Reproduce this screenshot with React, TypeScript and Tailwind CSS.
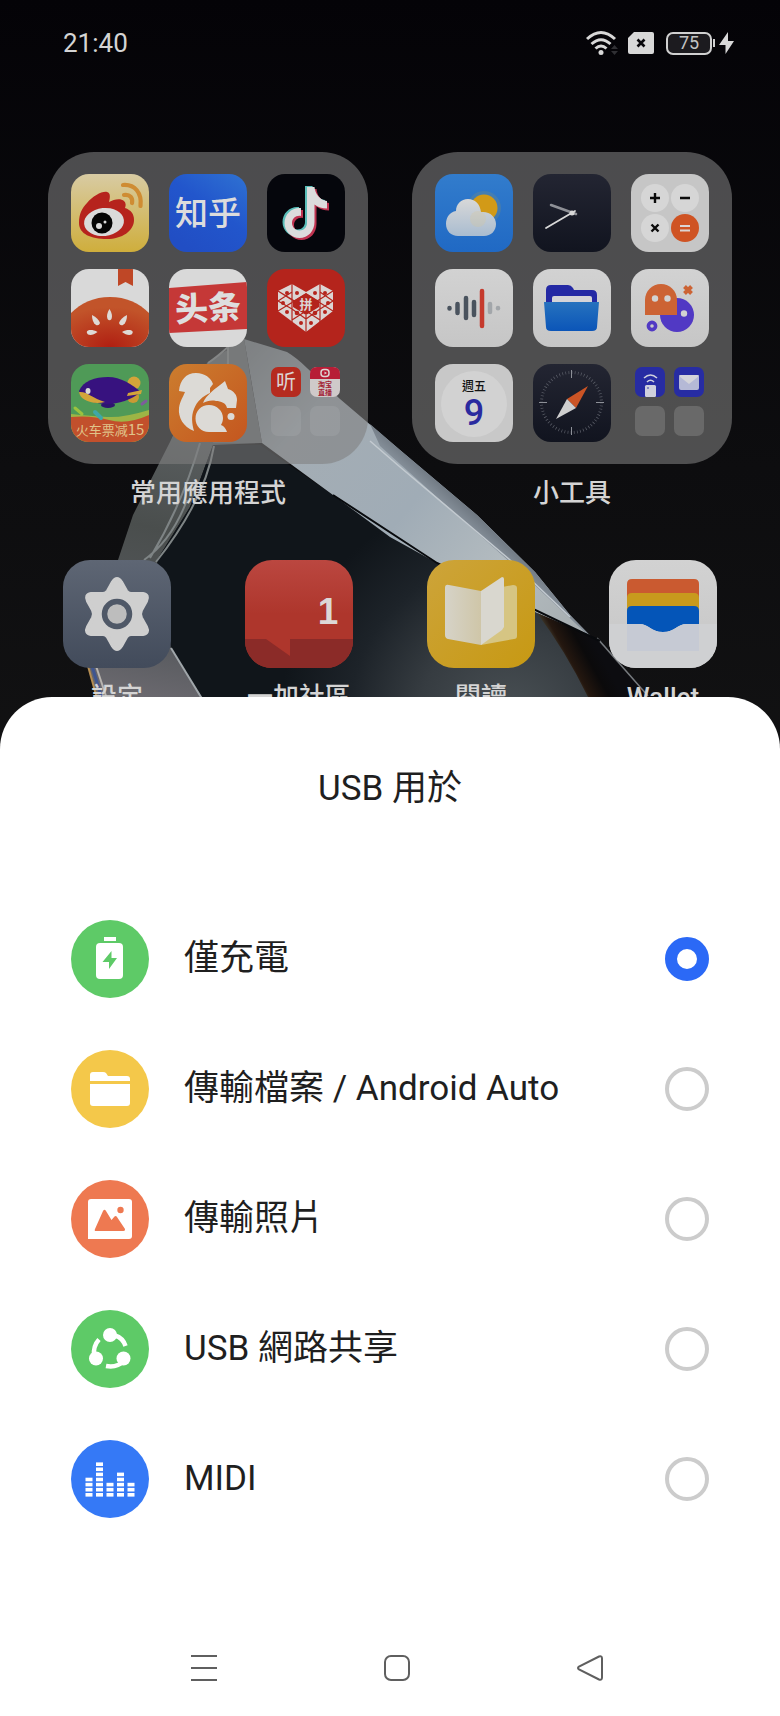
import React, { useState } from 'react';

type IconProps = { children: React.ReactNode };

const Tile: React.FC<IconProps> = ({ children }) => (
  <svg viewBox="0 0 78 78" className="size-[78px] rounded-[18px]" aria-hidden="true">
    {children}
  </svg>
);

const AppIcon: React.FC<IconProps> = ({ children }) => (
  <svg viewBox="0 0 108 108" className="size-[108px] rounded-[27px]" aria-hidden="true">
    {children}
  </svg>
);

const SC = "font-['Noto_Sans_CJK_SC',sans-serif]";
const TC = "font-['Noto_Sans_CJK_TC',sans-serif]";

/* Shared gradients, referenced by id from the icons below */
const Gradients = () => (
  <svg className="absolute size-0" aria-hidden="true">
    <defs>
      <linearGradient id="paper" x1="0" y1="0" x2="0" y2="1">
        <stop offset="0" stopColor="#d2d2d2" />
        <stop offset="1" stopColor="#c6c6c6" />
      </linearGradient>
      <linearGradient id="weibo" x1="0" y1="0" x2="0" y2="1">
        <stop offset="0" stopColor="#d8cba3" />
        <stop offset="1" stopColor="#cfae3c" />
      </linearGradient>
      <linearGradient id="zhihu" x1="1" y1="0" x2="0.3" y2="1">
        <stop offset="0" stopColor="#2f72d2" />
        <stop offset="0.5" stopColor="#2256cc" />
        <stop offset="1" stopColor="#214ec4" />
      </linearGradient>
      <radialGradient id="tomato" cx="0.5" cy="1" r="0.8">
        <stop offset="0" stopColor="#b01f12" />
        <stop offset="1" stopColor="#c2542a" />
      </radialGradient>
      <linearGradient id="uc" x1="0" y1="0" x2="1" y2="1">
        <stop offset="0" stopColor="#cc7d2e" />
        <stop offset="1" stopColor="#c4561f" />
      </linearGradient>
      <linearGradient id="sky" x1="0" y1="0" x2="0" y2="1">
        <stop offset="0" stopColor="#327ccc" />
        <stop offset="1" stopColor="#2069c4" />
      </linearGradient>
      <linearGradient id="cloud" x1="0" y1="0" x2="0" y2="1">
        <stop offset="0" stopColor="#d8d8d8" />
        <stop offset="1" stopColor="#a9bcd0" />
      </linearGradient>
      <linearGradient id="night" x1="0" y1="0" x2="0" y2="1">
        <stop offset="0" stopColor="#232532" />
        <stop offset="1" stopColor="#11141f" />
      </linearGradient>
      <linearGradient id="folder" x1="0" y1="0" x2="0" y2="1">
        <stop offset="0" stopColor="#2672be" />
        <stop offset="1" stopColor="#0b55b8" />
      </linearGradient>
      <linearGradient id="slate" x1="0" y1="0" x2="0" y2="1">
        <stop offset="0" stopColor="#5e6674" />
        <stop offset="1" stopColor="#424b5b" />
      </linearGradient>
      <linearGradient id="book" x1="0" y1="0" x2="1" y2="1">
        <stop offset="0" stopColor="#cda43a" />
        <stop offset="1" stopColor="#c79913" />
      </linearGradient>
      <linearGradient id="page" x1="0" y1="0" x2="1" y2="0">
        <stop offset="0" stopColor="#d6d3c8" />
        <stop offset="1" stopColor="#cfc6a8" />
      </linearGradient>
      <linearGradient id="bubble" x1="0" y1="0" x2="0" y2="1">
        <stop offset="0" stopColor="#bb4740" />
        <stop offset="0.5" stopColor="#ae362c" />
        <stop offset="1" stopColor="#ae362c" />
      </linearGradient>
    </defs>
  </svg>
);

const Wallpaper = () => (
  <svg
    viewBox="0 0 780 780"
    preserveAspectRatio="xMidYMin slice"
    className="absolute inset-0 h-full w-full"
    aria-hidden="true"
  >
    <defs>
      <linearGradient id="wp-bg" x1="0" y1="0" x2="0" y2="1">
        <stop offset="0" stopColor="#040307" />
        <stop offset="0.6" stopColor="#0d0d0f" />
        <stop offset="1" stopColor="#121213" />
      </linearGradient>
      <linearGradient id="wp-face" gradientUnits="userSpaceOnUse" x1="250" y1="350" x2="590" y2="640">
        <stop offset="0" stopColor="#7f868b" />
        <stop offset="0.2" stopColor="#a4adb4" />
        <stop offset="0.5" stopColor="#a0acb6" />
        <stop offset="0.75" stopColor="#b4bcc0" />
        <stop offset="1" stopColor="#a5acaf" />
      </linearGradient>
      <linearGradient id="wp-edge" gradientUnits="userSpaceOnUse" x1="470" y1="490" x2="450" y2="512">
        <stop offset="0" stopColor="#5a626b" />
        <stop offset="1" stopColor="#87919b" />
      </linearGradient>
      <linearGradient id="wp-band" gradientUnits="userSpaceOnUse" x1="200" y1="360" x2="130" y2="700">
        <stop offset="0" stopColor="#666b6e" />
        <stop offset="0.5" stopColor="#4a4e4d" />
        <stop offset="0.8" stopColor="#55585c" />
        <stop offset="1" stopColor="#6c6a70" />
      </linearGradient>
      <radialGradient id="wp-core" gradientUnits="userSpaceOnUse" cx="510" cy="720" r="230">
        <stop offset="0" stopColor="#4a5155" />
        <stop offset="0.4" stopColor="#363c41" />
        <stop offset="0.7" stopColor="#1d2329" />
        <stop offset="1" stopColor="#10151a" />
      </radialGradient>
      <linearGradient id="wp-amber" gradientUnits="userSpaceOnUse" x1="556" y1="660" x2="592" y2="640">
        <stop offset="0" stopColor="#565643" />
        <stop offset="0.3" stopColor="#24170f" />
        <stop offset="0.7" stopColor="#0b0a0b" />
        <stop offset="1" stopColor="#0c0c10" />
      </linearGradient>
    </defs>
    <rect width="780" height="780" fill="url(#wp-bg)" />
    <path d="M244 339L207 363L170 442L133 515L118 560L84 650L97 697L120 780H250L202 697L171 648L157 560L190 507L213 445L260 443Z" fill="url(#wp-band)" />
    <path d="M213 445H260L333 495L390 537L437 563L537 613L600 640L650 700V780H250L202 697L171 648L157 560L190 507Z" fill="url(#wp-core)" />
    <path d="M228 347L244 340L262 443H213L222 400Z" fill="#6d7173" />
    <path d="M244 339L287 352Q297 358 307 368L340 399L400 450L477 515L535 572L570 615L607 653L597 640L537 613L437 563L390 537L333 495L262 443L252 385Z" fill="url(#wp-face)" />
    <path d="M400 450L477 515L535 572L570 615L607 653L510 562L450 509L380 446L370 424Z" fill="url(#wp-edge)" />
    <path d="M370 441L400 467L457 515L510 560L570 617" fill="none" stroke="#c3cad0" strokeWidth="1.5" />
    <path d="M537 613L597 638L643 690L660 780H610L588 697Q565 650 537 613Z" fill="url(#wp-amber)" />
    <path d="M597 638L648 696" stroke="#777b7f" strokeWidth="1.5" />
    <path d="M333 495L437 563L600 641" fill="none" stroke="#080a0d" strokeWidth="2" />
    <path d="M187 500Q172 540 144 560M200 443Q182 505 150 558M214 446Q205 500 156 562" fill="none" stroke="#7e8485" strokeWidth="2" />
    <path d="M228 347Q217 357 208 363M228 347V365" fill="none" stroke="#8b8f90" strokeWidth="2" />
    <path d="M171 648L204 702" stroke="#a0a6aa" strokeWidth="2" />
    <path d="M88 666L98 702" stroke="#b58d52" strokeWidth="2" />
    <path d="M92 666L103 702" stroke="#3e5591" strokeWidth="3" />
    <path d="M96 666L108 702" stroke="#b9b5b0" strokeWidth="2" />
  </svg>
);

const Weibo = () => (
  <Tile>
    <rect width="78" height="78" fill="url(#weibo)" />
    <path d="M8 49C8 40 11 34 16 29C22 22 31 17 36 18C40 19 39 24 38 28C43 25 50 24 53 27C55 29 55 31 54 34C60 36 63 40 63 46C63 57 51 65 36 65C20 65 8 60 8 49Z" fill="#b6231d" />
    <ellipse cx="33" cy="48" rx="20" ry="14" transform="rotate(-6 33 48)" fill="#dadada" />
    <circle cx="31" cy="49" r="10.500" fill="#050505" />
    <circle cx="28" cy="52" r="3" fill="#dadada" />
    <circle cx="34" cy="48" r="1.500" fill="#dadada" />
    <path d="M52 11C64 10 71 19 69.500 32M53 21C59 20 62 24 61 29" fill="none" stroke="#cf8c33" strokeWidth="4.200" strokeLinecap="round" />
  </Tile>
);

const Zhihu = () => (
  <Tile>
    <rect width="78" height="78" fill="url(#zhihu)" />
    <text x="39" y="51" textAnchor="middle" fill="#dcdcdc" className={`${SC} text-[33px] font-medium`}>知乎</text>
  </Tile>
);

const notePath = 'M40 13H47.500C48 20 53 26 60 27V34.500C55 34.500 51 33 47.500 30.500V48C47.500 57 41 64 32.500 64C24 64 17.500 57 17.500 49C17.500 40 25 33 34 34V42C29 41 25 44.500 25 49C25 53 28.500 56.500 32.500 56.500C37 56.500 40 53 40 49Z';

const Douyin = () => (
  <Tile>
    <rect width="78" height="78" fill="#05060c" />
    <path d={notePath} transform="translate(-2 -1)" fill="#59bdb8" />
    <path d={notePath} transform="translate(2 2)" fill="#bf3350" />
    <path d={notePath} fill="#dcdcdc" />
  </Tile>
);

const Tomato = () => (
  <Tile>
    <rect width="78" height="78" fill="#d9d9d9" />
    <path d="M47 0H62V17L54.500 13L47 17Z" fill="#bf4726" />
    <path d="M0 44C10 34 23 28 39 28S68 34 78 44V78H0Z" fill="url(#tomato)" />
    <g fill="#dedad6">
      <path d="M38.500 40C41 44 41.500 47 40.500 50Q38.500 52.500 36.500 50C35.500 47 36 44 38.500 40Z" />
      <path d="M21 46C25.500 48 28 51 29 54Q28 57 25 56C22 54 21 50 21 46Z" />
      <path d="M56 46C51.500 48 49 51 48 54Q49 57 52 56C55 54 56 50 56 46Z" />
      <path d="M26.500 63C23 61 19.500 60.500 17 61.500Q14.500 63 17 65.500C20 66.500 23 65.500 26.500 63Z" />
      <path d="M51 63C54.500 61 58 60.500 60.500 61.500Q63 63 60.500 65.500C57.500 66.500 54.500 65.500 51 63Z" />
    </g>
  </Tile>
);

const Toutiao = () => (
  <Tile>
    <rect width="78" height="78" fill="#d9d9d9" />
    <path d="M0 19L78 13V60L0 64Z" fill="#c53837" />
    <text x="39" y="51" textAnchor="middle" fill="#dedede" transform="rotate(-3 39 39)" className={`${SC} text-[33px] font-black`}>头条</text>
  </Tile>
);

const Pinduoduo = () => (
  <Tile>
    <rect width="78" height="78" fill="#b4241c" />
    <path d="M25 15L39 23L53 15L66 22V42L39 63L11 42V22Z" fill="#dcd5d4" />
    <path d="M25 15V53M53 15V53M39 46V63M11 22L39 39L66 22M11 42L39 25L66 42M25 31L11 22M11 32L25 40L39 50L53 40L66 32M11 32L25 23M66 32L53 23M25 51L39 42L53 51" fill="none" stroke="#b4241c" strokeWidth="1.200" />
    <path d="M39 24L52 32V38L39 46L26 38V32Z" fill="#b4241c" />
    <g fill="#b4241c">
      <circle cx="20" cy="24" r="2" /><circle cx="30" cy="24" r="2" /><circle cx="16" cy="34" r="2" />
      <circle cx="48" cy="24" r="2" /><circle cx="58" cy="24" r="2" /><circle cx="61" cy="34" r="2" />
      <circle cx="20" cy="43" r="2" /><circle cx="30" cy="44" r="2.300" /><circle cx="48" cy="44" r="2.300" />
      <circle cx="58" cy="43" r="2" /><circle cx="34" cy="54" r="2" /><circle cx="44" cy="54" r="2" />
    </g>
    <text x="39" y="40" textAnchor="middle" fill="#dcd5d4" className={`${SC} text-[13px] font-bold`}>拼</text>
  </Tile>
);

const Qunar = () => (
  <Tile>
    <rect width="78" height="78" fill="#4f9a57" />
    <circle cx="63" cy="19" r="6.500" fill="#d3a43a" />
    <circle cx="62" cy="33" r="6" fill="#c99a34" />
    <path d="M0 50Q20 52 36 53T78 46V78H0Z" fill="#9db545" />
    <path d="M0 53Q20 51 38 56T78 51V78H0Z" fill="#c2502c" />
    <ellipse cx="37" cy="41" rx="7" ry="3" fill="#2d1570" />
    <path d="M8 27C12 17 24 13 37 13C50 13 60 20 70 28C60 36 48 40 35 40C20 39 10 35 8 27Z" fill="#37127f" />
    <path d="M8 28C16 27 21 34 34 38C21 41 9 36 8 28Z" fill="#d3a43a" />
    <path d="M57 29L71 26L70 30L56 32Z" fill="#d3a43a" />
    <ellipse cx="17" cy="27" rx="2.500" ry="3" fill="#d8d8d8" />
    <path d="M4 44L11 50" stroke="#9bc23f" strokeWidth="3" strokeLinecap="round" />
    <path d="M71 40L75 37" stroke="#7e5c9c" strokeWidth="3" strokeLinecap="round" />
    <path d="M24 48L30 54" stroke="#3fa7a6" strokeWidth="4" strokeLinecap="round" />
    <text x="39" y="71" textAnchor="middle" fill="#e0c48a" className={`${SC} text-[13px]`}>
      火车票减<tspan className="text-[15px]">15</tspan>
    </text>
  </Tile>
);

const UcBrowser = () => (
  <Tile>
    <rect width="78" height="78" fill="url(#uc)" />
    <g fill="#dcdad6">
      <path d="M10 27C11 16 17 9 27 9C36 9 42 14 44 20L41 24V29C34 32 28 37 25 45C22 52 23 60 25 67C14 63 9 53 10 44C11 37 14 33 16 28Z" />
      <path d="M34 39C37 31 46 25 56 17L59 25C65 27 68 31 68 36L67 44H58C57 39 52 37 47 37C42 36 38 37 34 39Z" />
      <path d="M40 41C48 41 54 47 54 54C54 57 53 59 52 61C55 62 57 65 58 68H40C32 68 26.500 62 26.500 54.500C26.500 47 32 41 40 41Z" />
      <circle cx="62" cy="52.500" r="3.500" />
    </g>
  </Tile>
);

const tinyText = "font-['Liberation_Sans','Noto_Sans_CJK_SC',sans-serif] text-[7px] font-bold";

const MediaFolder = () => (
  <Tile>
    <rect x="4" y="3" width="30" height="30" rx="7" fill="#b52b1f" />
    <text x="19" y="25" textAnchor="middle" fill="#dcd5d4" className={`${SC} text-[20px]`}>听</text>
    <rect x="43" y="3" width="30" height="30" rx="7" fill="#cfcaca" />
    <path d="M43 15V10Q43 3 50 3H66Q73 3 73 10V15Z" fill="#b71d36" />
    <rect x="54" y="5.500" width="8" height="7" rx="3" fill="none" stroke="#dcd5d4" strokeWidth="1.500" />
    <path d="M57.500 7.500L60 9L57.500 10.500Z" fill="#dcd5d4" />
    <text x="58" y="23" textAnchor="middle" fill="#a32133" className={tinyText}>淘宝</text>
    <text x="58" y="31" textAnchor="middle" fill="#a32133" className={tinyText}>直播</text>
    <rect x="4" y="42" width="30" height="30" rx="7" fill="#fff" opacity="0.080" />
    <rect x="43" y="42" width="30" height="30" rx="7" fill="#fff" opacity="0.080" />
  </Tile>
);

const Weather = () => (
  <Tile>
    <rect width="78" height="78" fill="url(#sky)" />
    <circle cx="49" cy="34" r="17" fill="#7d8f7a" opacity="0.300" />
    <circle cx="49" cy="34" r="13.500" fill="#d29a17" />
    <path d="M23 62C16 62 11 57 11 50C11 43 15 38 21 37C21 30 26 25 33 25C40 25 45 30 46 38C55 37 61 43 61 50C61 57 56 62 49 62Z" fill="url(#cloud)" />
    <circle cx="43" cy="45" r="8" fill="#d8c79c" opacity="0.300" />
  </Tile>
);

const Clock = () => (
  <Tile>
    <rect width="78" height="78" fill="url(#night)" />
    <path d="M18 31L43 40" stroke="#8e9096" strokeWidth="2.500" strokeLinecap="round" />
    <path d="M13 54L42 37" stroke="#d8d8d8" strokeWidth="1.800" strokeLinecap="round" />
    <circle cx="39" cy="39" r="2.500" fill="#d8d8d8" />
  </Tile>
);

const Calculator = () => (
  <Tile>
    <rect width="78" height="78" fill="#c6c6c6" />
    <g fill="#d6d6d6">
      <circle cx="24" cy="24" r="14" />
      <circle cx="54" cy="24" r="14" />
      <circle cx="24" cy="54" r="14" />
    </g>
    <circle cx="54" cy="54" r="14" fill="#cf5323" />
    <path d="M19 24H29M24 19V29M49 24H59M20.500 50.500L27.500 57.500M27.500 50.500L20.500 57.500" stroke="#0b0b0b" strokeWidth="2.400" />
    <path d="M49 52H59M49 56.500H59" stroke="#dcd5d4" strokeWidth="2" />
  </Tile>
);

const Recorder = () => (
  <Tile>
    <rect width="78" height="78" fill="url(#paper)" />
    <g strokeWidth="4.500" strokeLinecap="round" stroke="#4a535e">
      <path d="M14.500 39V39.500M22.500 35V44M31 29V49M39 33V46" />
      <path d="M47 22V57" stroke="#c53a2d" />
      <path d="M55 35V43" stroke="#a2a6aa" />
      <path d="M63 39V39.200" stroke="#a2a6aa" />
    </g>
  </Tile>
);

const Files = () => (
  <Tile>
    <rect width="78" height="78" fill="url(#paper)" />
    <path d="M13 40V21Q13 16 18 16H35Q38 16 40 19L41 21H59Q64 21 64 26V40Z" fill="#2429a4" />
    <path d="M19 40V29Q19 27 21 27H57Q59 27 59 29V40Z" fill="#d4d4d8" />
    <path d="M11 33H66L64 58Q64 62 59 62H18Q13 62 13 58Z" fill="url(#folder)" />
  </Tile>
);

const Games = () => (
  <Tile>
    <rect width="78" height="78" fill="url(#paper)" />
    <circle cx="46" cy="46" r="17" fill="#5139c4" />
    <path d="M14 46V31C14 22 21 15 30 15S46 22 46 31V46Z" fill="#cc6334" />
    <g fill="#d2d2d2">
      <circle cx="24" cy="29.500" r="3.200" />
      <circle cx="36.500" cy="29.500" r="3.200" />
      <circle cx="53" cy="44.500" r="3.200" />
    </g>
    <circle cx="21" cy="57" r="3.600" fill="none" stroke="#5139c4" strokeWidth="3.600" />
    <path d="M53.500 17.500L60.500 24.500M60.500 17.500L53.500 24.500" stroke="#cc6334" strokeWidth="4" />
  </Tile>
);

const Calendar = () => (
  <Tile>
    <rect width="78" height="78" fill="#c8c8c8" />
    <circle cx="39" cy="40" r="33" fill="#d2d2d2" />
    <text x="39" y="27" textAnchor="middle" fill="#111" className={`${TC} text-[12px] font-medium`}>週五</text>
    <text x="39" y="61" textAnchor="middle" fill="#2a2a9f" className="font-['Roboto',sans-serif] text-[36px] font-medium">9</text>
  </Tile>
);

const Compass = () => (
  <Tile>
    <rect width="78" height="78" fill="url(#night)" />
    <circle cx="38.500" cy="38.500" r="30" fill="none" stroke="#5c5f69" strokeWidth="3" strokeDasharray="0.700 2.440" />
    <path d="M38.500 6V14M38.500 63V71M6 38.500H14M63 38.500H71" stroke="#8d9098" />
    <path d="M55 22L34 35L43 44Z" fill="#cb5425" />
    <path d="M23 55L34 35L43 44Z" fill="#cfcfcf" />
  </Tile>
);

const ToolFolder = () => (
  <Tile>
    <rect x="4" y="3" width="30" height="30" rx="7" fill="#272ca3" />
    <rect x="14" y="21" width="11" height="12" rx="1.500" fill="#cfd0dd" />
    <circle cx="17" cy="24" r="0.800" fill="#272ca3" />
    <path d="M13 14Q19.500 8 26 14M16 18Q19.500 14.500 23 18" fill="none" stroke="#cfd0dd" strokeWidth="1.600" />
    <rect x="43" y="3" width="30" height="30" rx="7" fill="#272ca3" />
    <rect x="48" y="11" width="20" height="15" rx="2" fill="#b5b9d6" />
    <path d="M48 12L58 20L68 12Q68 11 66 11H50Q48 11 48 12Z" fill="#d4d4da" />
    <rect x="4" y="42" width="30" height="30" rx="7" fill="#696969" />
    <rect x="43" y="42" width="30" height="30" rx="7" fill="#696969" />
  </Tile>
);

const SettingsIcon = () => (
  <AppIcon>
    <rect width="108" height="108" fill="url(#slate)" />
    <path
      d="M50 22Q54 16 58 22L63 31Q65 34 68 34H80Q86 35 83 41L78 50Q76 54 78 58L83 67Q86 73 80 74H68Q65 74 63 77L58 86Q54 92 50 86L45 77Q43 74 40 74H28Q22 73 25 67L30 58Q32 54 30 50L25 41Q22 35 28 34H40Q43 34 45 31Z"
      fill="#cfcfcf" stroke="#cfcfcf" strokeWidth="4" strokeLinejoin="round"
    />
    <circle cx="54" cy="54" r="12.500" fill="#bdbdbd" stroke="#4f5867" strokeWidth="5.500" />
  </AppIcon>
);

const Community = () => (
  <AppIcon>
    <rect width="108" height="108" fill="url(#bubble)" />
    <path d="M0 79H108V108H0Z" fill="#8b2b28" />
    <path d="M21 79L45 96V79Z" fill="#ae362c" />
    <text x="83" y="64" textAnchor="middle" fill="#dcd8d7" className="font-['Liberation_Sans',sans-serif] text-[37px] font-bold">1</text>
  </AppIcon>
);

const Reader = () => (
  <AppIcon>
    <rect width="108" height="108" fill="url(#book)" />
    <path d="M54 85V31L86 25Q90 25 90 28V76Q90 79 87 79Z" fill="#d6c583" />
    <path d="M18 28Q18 24 22 25L54 31V85L21 79Q18 78 18 75Z" fill="url(#page)" />
    <path d="M54 31L75 17Q77 17 77 19V67L75 70L54 85Z" fill="#d9d7cf" />
  </AppIcon>
);

const Wallet = () => (
  <AppIcon>
    <rect width="108" height="108" fill="url(#paper)" />
    <path d="M18 66V24Q18 19 23 19H85Q90 19 90 24V66Z" fill="#ca5a30" />
    <path d="M18 66V38Q18 33 23 33H85Q90 33 90 38V66Z" fill="#c89a1d" />
    <path d="M18 76V51Q18 46 23 46H85Q90 46 90 51V76Z" fill="#0455b8" />
    <path d="M0 64H30C40 64 42 72 54 72S68 64 78 64H108V108H0Z" fill="#cfd0d2" />
    <path d="M18 64H30C40 64 42 72 54 72S68 64 78 64H90V91H18Z" fill="#c6cad4" />
  </AppIcon>
);

const folders = [
  {
    name: '常用應用程式',
    icons: [Weibo, Zhihu, Douyin, Tomato, Toutiao, Pinduoduo, Qunar, UcBrowser, MediaFolder],
  },
  {
    name: '小工具',
    icons: [Weather, Clock, Calculator, Recorder, Files, Games, Calendar, Compass, ToolFolder],
  },
];

const apps = [
  { name: '設定', Icon: SettingsIcon },
  { name: '一加社區', Icon: Community },
  { name: '閱讀', Icon: Reader },
  { name: 'Wallet', Icon: Wallet },
];

const StatusBar = () => (
  <header className="flex h-[86px] items-center justify-between pr-[46px] pl-[63px]">
    <span className="text-[26px] leading-8 text-[#d4d4d4]">21:40</span>
    <div className="flex items-center gap-[10px]">
      <svg viewBox="0 0 32 26" className="h-[26px] w-8" aria-hidden="true">
        <g fill="none" stroke="#d8d8d8" strokeWidth="3">
          <path d="M1 9Q15 -4 29 9" />
          <path d="M5.500 14Q15 5.500 24.500 14" />
          <path d="M9.500 18.500Q15 13.500 20.500 18.500" />
        </g>
        <circle cx="15" cy="22.500" r="2.500" fill="#d8d8d8" />
        <path d="M25 19L28.500 15L32 19ZM25 21L28.500 25L32 21Z" fill="#303034" />
      </svg>
      <svg viewBox="0 0 26 22" className="h-[22px] w-[26px]" aria-hidden="true">
        <path d="M6 0H24Q26 0 26 2V20Q26 22 24 22H2Q0 22 0 20V6Z" fill="#d8d8d8" />
        <path d="M9.500 7.500L16.500 14.500M16.500 7.500L9.500 14.500" stroke="#08070b" strokeWidth="2.600" />
      </svg>
      <div className="ml-[2px] flex items-center gap-px">
        <div className="flex h-[23px] w-[46px] items-center justify-center rounded-[7px] border-2 border-[#d0d0d0] bg-[#1c1b1f] text-[18px] leading-none text-[#c4c4c4]">
          75
        </div>
        <div className="h-2 w-[2px] bg-[#d0d0d0]" />
        <svg viewBox="0 0 15 24" className="ml-[3px] h-6 w-[15px]" aria-hidden="true">
          <path d="M9 1L0 14H6.500V23L15 10H9Z" fill="#d8d8d8" />
        </svg>
      </div>
    </div>
  </header>
);

const BatteryGlyph = () => (
  <>
    <rect x="33" y="17" width="12" height="4" fill="#fff" />
    <rect x="25" y="23" width="27" height="36" rx="4" fill="#fff" />
    <path d="M40.500 31L31.500 42H38V49L46 38H40.500Z" fill="#5eca67" />
  </>
);

const FolderGlyph = () => (
  <>
    <path d="M19 31V25Q19 22 22 22H32Q34 22 35 23L37 26H56Q59 26 59 29V31Z" fill="#fff" />
    <path d="M19 34H59V53Q59 56 56 56H22Q19 56 19 53Z" fill="#fff" />
  </>
);

const PhotoGlyph = () => (
  <>
    <path d="M20 19H58Q61 19 61 22V56Q61 59 58 59H17V22Q17 19 20 19Z" fill="#fff" />
    <path d="M24 49L32 31Q33.500 28.500 35 31L40.500 40L43.500 36.500Q45 35.500 46 37L54 49Q54.500 51 52.500 51H25Q23 51 24 49Z" fill="#ee7951" />
    <circle cx="49.500" cy="30" r="3.200" fill="#ee7951" />
  </>
);

const ShareGlyph = () => (
  <>
    <circle cx="39" cy="25" r="7" fill="#fff" />
    <circle cx="25" cy="48.500" r="7" fill="#fff" />
    <circle cx="52.500" cy="48.500" r="7" fill="#fff" />
    <path d="M44 25.500Q52 28 54.500 36M28 29.500Q22 36 23 46M35 56Q46 58 53 51" fill="none" stroke="#fff" strokeWidth="4.500" />
  </>
);

const MidiGlyph = () => (
  <>
    {[4, 7, 3, 5, 3].map((count, col) =>
      Array.from({ length: count }, (_, i) => (
        <rect key={`${col}-${i}`} x={14.5 + col * 10.5} y={53 - i * 5.1} width="7" height="3.600" fill="#fff" />
      ))
    )}
  </>
);

const options = [
  { id: 'charge', label: '僅充電', bg: 'bg-[#5eca67]', Glyph: BatteryGlyph },
  { id: 'files', label: '傳輸檔案 / Android Auto', bg: 'bg-[#f4c84a]', Glyph: FolderGlyph },
  { id: 'photos', label: '傳輸照片', bg: 'bg-[#ee7951]', Glyph: PhotoGlyph },
  { id: 'tethering', label: 'USB 網路共享', bg: 'bg-[#5eca67]', Glyph: ShareGlyph },
  { id: 'midi', label: 'MIDI', bg: 'bg-[#3579f6]', Glyph: MidiGlyph },
];

const App: React.FC = () => {
  const [mode, setMode] = useState('charge');

  return (
    <div className="flex min-h-screen flex-col bg-white font-['Roboto','Noto_Sans_CJK_TC',sans-serif]">
      <Gradients />

      {/* Home screen */}
      <section className="relative overflow-hidden bg-[#0d0d0f] pb-[65px]">
        <Wallpaper />
        <div className="relative">
          <StatusBar />

          <div className="mt-[66px] grid grid-cols-2 gap-11 px-12">
            {folders.map(({ name, icons }) => (
              <button key={name} type="button" className="flex flex-col items-center gap-[11px]">
                <span className="grid w-full grid-cols-3 justify-items-center gap-y-[17px] rounded-[46px] bg-[#808080]/58 px-[13px] py-[22px]">
                  {icons.map((Icon, i) => (
                    <Icon key={i} />
                  ))}
                </span>
                <span className="text-[26px] leading-9 font-medium text-[#d4d4d4]">{name}</span>
              </button>
            ))}
          </div>

          <div className="mt-[49px] flex justify-between px-[63px]">
            {apps.map(({ name, Icon }) => (
              <button key={name} type="button" className="flex w-[108px] flex-col items-center gap-[11px]">
                <Icon />
                <span className="text-[26px] leading-9 font-medium whitespace-nowrap text-[#d4d4d4]">{name}</span>
              </button>
            ))}
          </div>
        </div>
      </section>

      {/* USB mode sheet */}
      <section className="relative -mt-[83px] flex flex-1 flex-col rounded-t-[52px] bg-white pt-[68px] text-[#1f1f1f]">
        <h1 className="text-center text-[35px] leading-[48px]">USB 用於</h1>

        <div role="radiogroup" aria-label="USB 用於" className="mt-[81px] px-[71px]">
          {options.map(({ id, label, bg, Glyph }) => (
            <label key={id} htmlFor={id} className="flex h-[130px] cursor-pointer items-center">
              <svg viewBox="0 0 78 78" className={`size-[78px] rounded-full ${bg}`} aria-hidden="true">
                <Glyph />
              </svg>
              <span className="ml-[35px] flex-1 text-[35px] leading-[48px]">{label}</span>
              <input
                id={id}
                type="radio"
                name="usb-mode"
                checked={mode === id}
                onChange={() => setMode(id)}
                className="size-11 appearance-none rounded-full border-4 border-[#cccccc] bg-white checked:border-12 checked:border-[#2b69f6]"
              />
            </label>
          ))}
        </div>

        <nav className="mt-auto grid h-24 grid-cols-3 items-center justify-items-center pr-[94px] pl-[107px]">
          <button type="button" aria-label="Recents">
            <svg viewBox="0 0 26 26" className="size-[26px]" fill="none" stroke="#5f5f5f" strokeWidth="2">
              <path d="M0 1H26M0 13H26M0 25H26" />
            </svg>
          </button>
          <button type="button" aria-label="Home">
            <svg viewBox="0 0 26 26" className="size-[26px]" fill="none" stroke="#5f5f5f" strokeWidth="2">
              <rect x="1" y="1" width="24" height="24" rx="6" />
            </svg>
          </button>
          <button type="button" aria-label="Back">
            <svg viewBox="0 0 26 26" className="size-[26px]" fill="none" stroke="#5f5f5f" strokeWidth="2">
              <path d="M22 1.500Q25 0.500 25 3.500V22.500Q25 25.500 22 24.500L2 14.500Q0 13 2 11.500Z" />
            </svg>
          </button>
        </nav>
      </section>
    </div>
  );
};

export default App;
